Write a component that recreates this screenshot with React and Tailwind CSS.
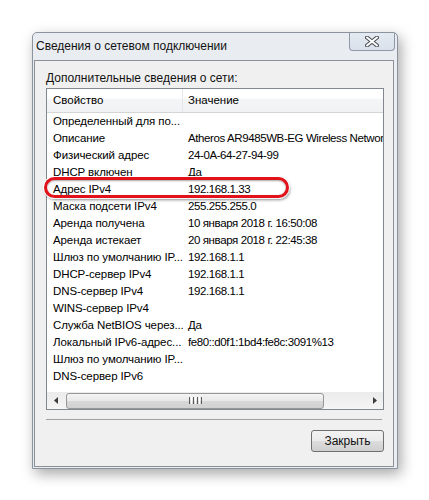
const ROWS = [
  ['Определенный для по...', ''],
  ['Описание', 'Atheros AR9485WB-EG Wireless Network Adapter'],
  ['Физический адрес', '24-0A-64-27-94-99'],
  ['DHCP включен', 'Да'],
  ['Адрес IPv4', '192.168.1.33'],
  ['Маска подсети IPv4', '255.255.255.0'],
  ['Аренда получена', '10 января 2018 г. 16:50:08'],
  ['Аренда истекает', '20 января 2018 г. 22:45:38'],
  ['Шлюз по умолчанию IP...', '192.168.1.1'],
  ['DHCP-сервер IPv4', '192.168.1.1'],
  ['DNS-сервер IPv4', '192.168.1.1'],
  ['WINS-сервер IPv4', ''],
  ['Служба NetBIOS через...', 'Да'],
  ['Локальный IPv6-адрес...', 'fe80::d0f1:1bd4:fe8c:3091%13'],
  ['Шлюз по умолчанию IP...', ''],
  ['DNS-сервер IPv6', ''],
];

export default function App() {
  return (
    <div className="w-[429px] h-[500px] bg-white pt-[32px] pl-[32px] text-black font-['Liberation_Sans',Arial,sans-serif]">
      {/* window */}
      <div className="w-[366px] h-[437px] flex flex-col bg-[#e9edf2] border border-[#8a939e] rounded-t-[5px] shadow-[3px_5px_14px_rgba(0,0,0,0.35)]">
        {/* title bar */}
        <div className="h-[27px] flex items-start justify-between">
          <span className="pl-[3px] pt-[5px] text-[12px] leading-[16px] text-[#111]">Сведения о сетевом подключении</span>
          <div className="mr-[2px] w-[46px] h-[18px] flex items-center justify-center rounded-b-[4px] border border-t-0 border-[#8e98a6] bg-gradient-to-b from-[#e4eaf1] to-[#d9e1eb]">
            <svg width="14" height="11" viewBox="0 0 14 11">
              <path d="M2 1.5 L12 9.5 M12 1.5 L2 9.5" stroke="#4b4f55" strokeWidth="4" strokeLinecap="round" />
              <path d="M2 1.5 L12 9.5 M12 1.5 L2 9.5" stroke="#ffffff" strokeWidth="2" strokeLinecap="round" />
            </svg>
          </div>
        </div>

        {/* client area */}
        <div className="flex-1 ml-[1px] mr-[3px] mb-[1px] bg-[#f0f0f0] border border-[#8d9096] flex flex-col pl-[11px] pr-[9px] text-[12px]">
          <div className="pt-[10px] h-[27px] leading-[14px] text-[#111]">Дополнительные сведения о сети:</div>

          {/* list view */}
          <div className="relative h-[322px] bg-white border border-[#828790] flex flex-col text-[11.5px]">
            <div className="h-[24px] shrink-0 flex border-b border-[#d5d5d5] bg-[linear-gradient(#ffffff_0%,#ffffff_40%,#f4f5f7_45%,#f1f2f4_100%)]">
              <div className="w-[136px] pl-[6px] flex items-center border-r border-[#e3e6ea]">Свойство</div>
              <div className="flex-1 pl-[5px] flex items-center">Значение</div>
            </div>
            <div className="flex-1 overflow-hidden">
              {ROWS.map(([k, v], i) => (
                <div key={i} className="h-[17px] flex items-center whitespace-nowrap leading-[17px]">
                  <div className="w-[136px] shrink-0 pl-[6px] overflow-hidden tracking-[-0.1px]">{k}</div>
                  <div className="flex-1 pl-[5px] overflow-hidden tracking-[-0.4px]">{v}</div>
                </div>
              ))}
            </div>

            {/* horizontal scrollbar */}
            <div className="h-[17px] shrink-0 flex items-center bg-[linear-gradient(#ebebeb,#f5f5f5)]">
              <div className="w-[17px] h-full flex items-center justify-center">
                <svg width="4" height="7" viewBox="0 0 4 7"><path d="M4 0 L0 3.5 L4 7 Z" fill="#3c3c3c" /></svg>
              </div>
              <div className="flex-1 h-full flex items-center">
                <div className="ml-[2px] w-[258px] h-[16px] rounded-[3px] border border-[#979797] bg-[linear-gradient(#f3f3f3_0%,#e9e9e9_50%,#d8d8d8_51%,#d1d1d1_100%)] flex items-center justify-center gap-[1px]">
                  <span className="w-[1px] h-[7px] bg-[#5a5a5a]" />
                  <span className="w-[1px] h-[7px] bg-white" />
                  <span className="w-[1px] h-[7px] bg-[#5a5a5a]" />
                  <span className="w-[1px] h-[7px] bg-white" />
                  <span className="w-[1px] h-[7px] bg-[#5a5a5a]" />
                  <span className="w-[1px] h-[7px] bg-white" />
                  <span className="w-[1px] h-[7px] bg-[#5a5a5a]" />
                </div>
              </div>
              <div className="w-[17px] h-full flex items-center justify-center">
                <svg width="4" height="7" viewBox="0 0 4 7"><path d="M0 0 L4 3.5 L0 7 Z" fill="#3c3c3c" /></svg>
              </div>
            </div>

            {/* red highlight */}
            <div className="absolute left-[-3px] top-[88px] w-[245px] h-[21px] rounded-full border-[3px] border-[#e2121b] shadow-[0_0_0_1px_rgba(255,255,255,0.9),1px_2px_3px_rgba(0,0,0,0.45),inset_0_1px_2px_rgba(0,0,0,0.35)]" />
          </div>

          <div className="mt-[9px] mr-[2px] h-[1px] bg-[#a0a0a0]" />

          <div className="mt-[10px] flex justify-end">
            <button className="w-[73px] h-[22px] rounded-[3px] border border-[#707070] bg-[linear-gradient(#f2f2f2_0%,#ebebeb_50%,#dddddd_51%,#cfcfcf_100%)] text-[12px] leading-[20px] text-[#111]">
              Закрыть
            </button>
          </div>
        </div>
      </div>
    </div>
  );
}
